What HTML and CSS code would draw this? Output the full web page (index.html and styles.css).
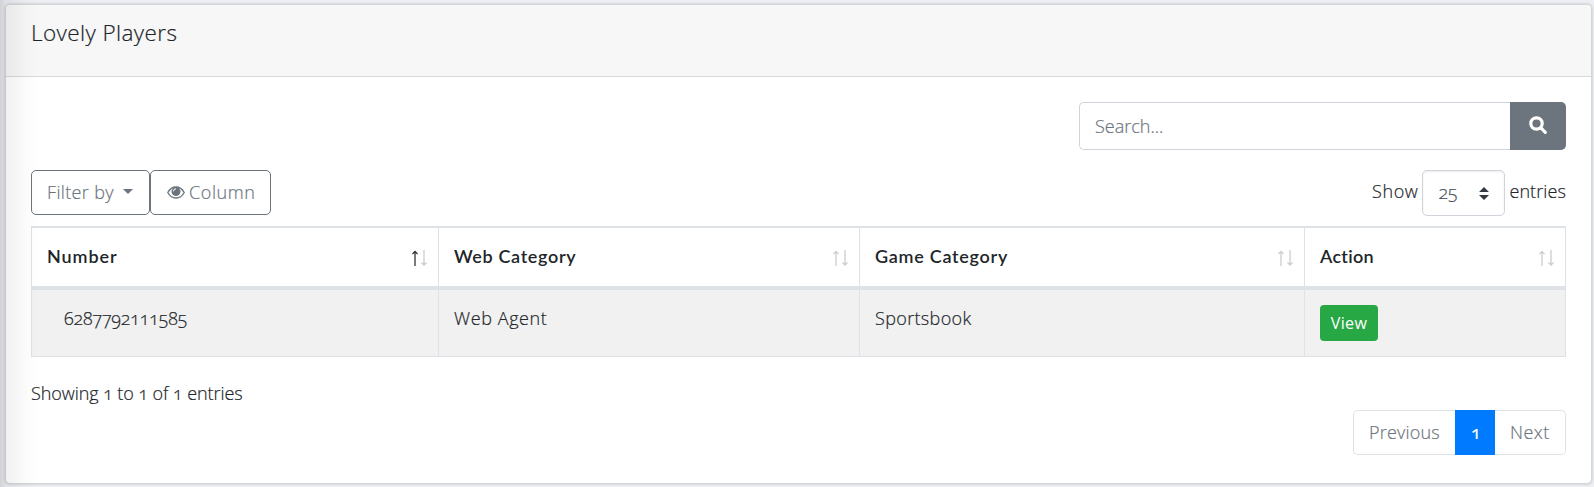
FILE: index.html
```
<!DOCTYPE html>
<html lang="en">
<head>
<meta charset="utf-8">
<title>Lovely Players</title>
<link rel="stylesheet" href="styles.css">
</head>
<body>
<svg width="0" height="0" class="defs">
  <symbol id="sort" viewBox="0 0 17 16"><path class="up" d="M4 2V16M1.5 4L4 1.4L6.500 4"/><path class="down" d="M13 0V14.500M10.500 12.500L13 15L15.500 12.500"/></symbol>
</svg>
<main class="card">
  <header class="card-header"><h1>Lovely Players</h1></header>
  <div class="card-body">
    <div class="search-row">
      <div class="search-input"><span>Search...</span></div>
      <button class="search-btn" aria-label="Search"><svg width="18" height="18" viewBox="0 0 18 18"><circle cx="7.500" cy="7.500" r="5.700"/><path d="M11.700 11.700L16.300 16.300"/></svg></button>
    </div>
    <div class="toolbar">
      <button class="btn filter"><span class="t-filter">Filter by</span><i class="caret"></i></button>
      <button class="btn column"><svg width="18" height="13" viewBox="0 0 18 13"><path class="lid" d="M.8 6.500C4.800-.9 13.200-.9 17.200 6.500C13.200 13.900 4.800 13.900 .8 6.500Z"/><circle cx="9" cy="5.600" r="4.500"/><path class="glint" d="M6.400 5.400A2.600 2.600 0 0 1 9 2.800"/></svg><span class="t-column">Column</span></button>
      <div class="length"><span class="t-show">Show</span><span class="select"><span class="value">25</span><svg width="10" height="13" viewBox="0 0 10 13"><path d="M0 5L5 0L10 5ZM0 8H10L5 13Z"/></svg></span><span class="t-entries">entries</span></div>
    </div>
    <table class="grid">
      <colgroup><col class="c1"><col class="c2"><col class="c3"><col class="c4"></colgroup>
      <thead><tr>
        <th><div class="th"><span class="h-number">Number</span><svg class="sort asc" width="17" height="16"><use href="#sort"/></svg></div></th>
        <th><div class="th"><span class="h-web">Web Category</span><svg class="sort" width="17" height="16"><use href="#sort"/></svg></div></th>
        <th><div class="th"><span class="h-game">Game Category</span><svg class="sort" width="17" height="16"><use href="#sort"/></svg></div></th>
        <th><div class="th"><span class="h-action">Action</span><svg class="sort" width="17" height="16"><use href="#sort"/></svg></div></th>
      </tr></thead>
      <tbody><tr>
        <td class="num">6287792111585</td>
        <td class="web">Web Agent</td>
        <td class="game">Sportsbook</td>
        <td class="act"><button class="view">View</button></td>
      </tr></tbody>
    </table>
    <div class="info">Showing 1 to 1 of 1 entries</div>
    <nav class="pager"><a class="prev">Previous</a><a class="current">1</a><a class="next">Next</a></nav>
  </div>
</main>
<div class="side-shadow"></div>
</body>
</html>
```
FILE: styles.css
```
* { box-sizing: border-box; }
body {
  margin: 0;
  height: 487px;
  padding: 4px 2px 3px 5px;
  overflow: hidden;
  background: #eeeff4;
  color: #212529;
  font: 300 18px/27px "Open Sans", sans-serif;
  font-feature-settings: "onum" 1;
  -webkit-text-stroke: .2px;
}
button { font: inherit; margin: 0; padding: 0; }
svg { display: block; flex: none; }
.defs { position: absolute; }

.card {
  height: 480px;
  border: 1px solid #d5d6d8;
  border-radius: 5px;
  background: #fff;
  box-shadow: 0 0 2px 1px rgba(0, 0, 0, .1);
  overflow: hidden;
}
.card-header {
  height: 72px;
  padding: 14px 25px;
  background: #f7f7f7;
  border-bottom: 1px solid #d8d9da;
}
h1 { margin: 0; font-size: 22.500px; font-weight: 300; line-height: 27px; letter-spacing: .4px; }
.card-body { padding: 25px 25px 0; }

.search-row { display: flex; justify-content: flex-end; height: 48px; }
.search-input {
  width: 431px;
  padding: 10px 15px;
  border: 1px solid #ced4da;
  border-right: 0;
  border-radius: 5px 0 0 5px;
  color: #6c757d;
}
.search-btn {
  display: flex;
  justify-content: center;
  align-items: center;
  width: 56px;
  padding-bottom: 2px;
  border: 0;
  border-radius: 0 5px 5px 0;
  background: #6c757d;
}
.search-btn svg { fill: none; stroke: #fff; stroke-width: 3.200; stroke-linecap: round; }

.toolbar { display: flex; height: 46px; margin-top: 20px; }
.btn {
  display: flex;
  align-items: center;
  height: 45px;
  border: 1px solid #6c757d;
  border-radius: 5px;
  background: #fff;
  color: #6c757d;
}
.filter { width: 119px; padding-left: 15px; }
.column { width: 121px; padding-left: 16px; gap: 4px; }
.t-filter { letter-spacing: .35px; }
.t-column { letter-spacing: .6px; }
.caret {
  margin: 0 0 3px 9px;
  border: 5.500px solid transparent;
  border-top-color: #6c757d;
  border-bottom: 0;
}
.column svg { fill: #6c757d; }
.column .lid { fill: none; stroke: #6c757d; stroke-width: 1.400; }
.column .glint { fill: none; stroke: #fff; stroke-width: 1; }

.length { display: flex; align-items: center; margin-left: auto; }
.t-show { letter-spacing: .6px; margin: 0 4px 3px 0; }
.t-entries { margin-bottom: 3px; letter-spacing: .1px; }
.select {
  display: flex;
  align-items: center;
  justify-content: space-between;
  width: 83px;
  height: 46px;
  margin-right: 4px;
  padding: 0 15px;
  border: 1px solid #ced4da;
  border-radius: 5px;
  box-shadow: inset 0 1px 2px rgba(0, 0, 0, .075);
  color: #495057;
}
.value { margin-bottom: 2px; }
.select svg { fill: #343a40; }

.grid {
  width: 1535px;
  margin-top: 10px;
  table-layout: fixed;
  border-collapse: separate;
  border-spacing: 0;
  border-left: 1px solid #dee2e6;
}
.c1 { width: 407px; }
.c2 { width: 421px; }
.c3 { width: 445px; }
th, td { border-right: 1px solid #dee2e6; text-align: left; vertical-align: top; }
th {
  height: 64px;
  padding: 15px 10px 0 15px;
  border-top: 2px solid #dee2e6;
  border-bottom: 4px solid #dee2e6;
  font-family: Lato, sans-serif;
  font-weight: 600;
  -webkit-text-stroke: 0;
}
.th { display: flex; justify-content: space-between; }
.h-number { letter-spacing: .9px; }
.h-web { letter-spacing: .65px; }
.h-game { letter-spacing: .72px; }
.h-action { letter-spacing: .3px; }
.sort { margin-top: 7px; fill: none; stroke: #cdcdcd; stroke-width: 1.300; }
.asc { --first: #30343a; }
.up { stroke: var(--first, #cdcdcd); }
td { height: 67px; padding: 15px 15px 0; border-bottom: 1px solid #dee2e6; background: #f1f1f1; }
.num { padding-left: 32px; letter-spacing: -.17px; }
.web { letter-spacing: .6px; }
.game { letter-spacing: .35px; }
.view {
  display: block;
  width: 58px;
  height: 36px;
  border: 0;
  border-radius: 4px;
  background: #28a745;
  color: #fff;
  font-size: 16px;
  font-weight: 400;
  letter-spacing: .4px;
  -webkit-text-stroke: 0;
}

.info { margin-top: 23px; letter-spacing: -.07px; }
.pager { display: flex; justify-content: flex-end; height: 45px; margin-top: 3px; color: #6c757d; }
.pager a { padding: 8px 15px; border: 1px solid #dee2e6; }
.pager .prev { width: 102px; border-right: 0; border-radius: 5px 0 0 5px; letter-spacing: .2px; }
.pager .current { width: 40px; border-color: #007bff; background: #007bff; color: #fff; font-weight: 400; }
.pager .next { width: 71px; border-left: 0; border-radius: 0 5px 5px 0; letter-spacing: .5px; }

/* shade cast by the sidebar over the left page edge */
.side-shadow {
  position: absolute;
  inset: 0 auto 0 0;
  width: 38px;
  pointer-events: none;
  background: linear-gradient(90deg, rgba(0, 0, 0, .12), rgba(0, 0, 0, .06) 6px, rgba(0, 0, 0, .018) 24px, transparent);
}
```
